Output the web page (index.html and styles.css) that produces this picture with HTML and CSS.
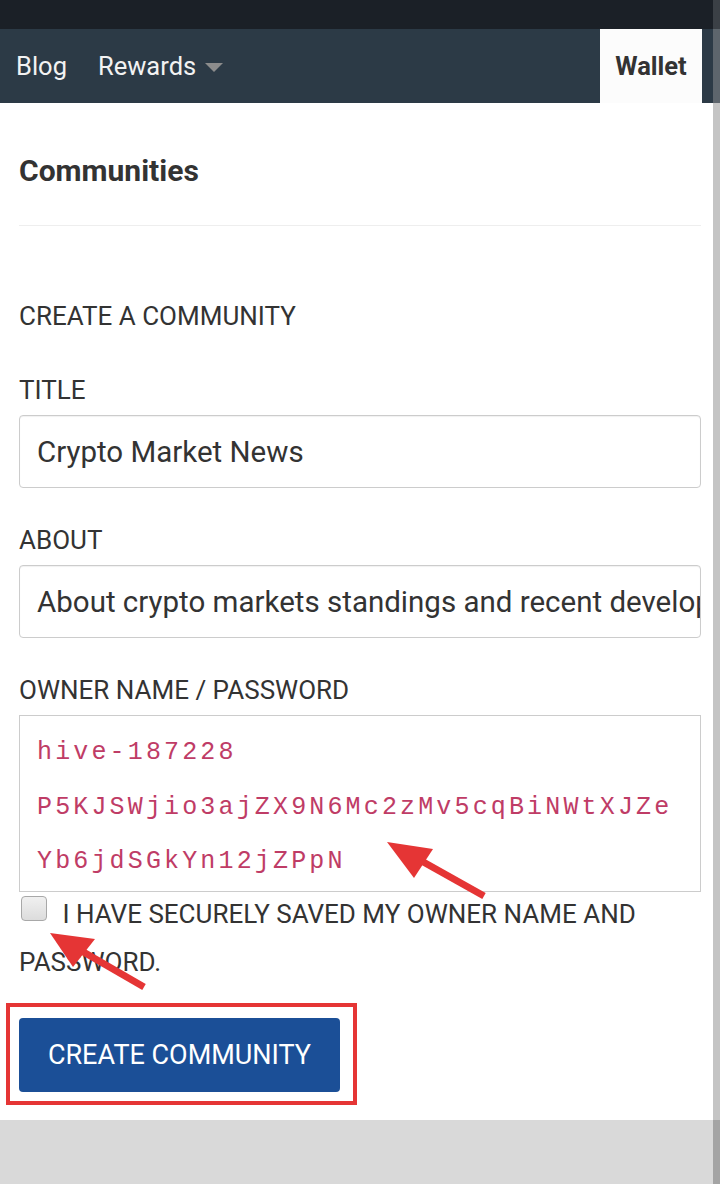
FILE: index.html
```html
<!DOCTYPE html>
<html lang="en">
  <head>
    <meta charset="utf-8">
    <title>Communities - Create</title>
    <link rel="stylesheet" href="styles.css">
  </head>
  <body>
    <div class="topbar"></div>
    <nav class="nav">
      <a class="nav_link">Blog</a>
      <a class="nav_link">Rewards<span class="caret"></span></a>
      <a class="nav_tab">Wallet</a>
    </nav>

    <main class="content">
      <h1 class="heading">Communities</h1>

      <form class="form">
        <div class="form_title">CREATE A COMMUNITY</div>

        <label class="field">
          <span class="field_label">TITLE</span>
          <span class="input">Crypto Market News</span>
        </label>

        <label class="field">
          <span class="field_label">ABOUT</span>
          <span class="input">About crypto markets standings and recent developments</span>
        </label>

        <div class="field field_code">
          <span class="field_label">OWNER NAME / PASSWORD</span>
          <div class="code_box">
            <span class="code_line">hive-187228</span>
            <span class="code_line">P5KJSWjio3ajZX9N6Mc2zMv5cqBiNWtXJZe</span>
            <span class="code_line">Yb6jdSGkYn12jZPpN</span>
          </div>
        </div>

        <label class="confirm">
          <span class="checkbox"></span>
          I HAVE SECURELY SAVED MY OWNER NAME AND PASSWORD.
        </label>

        <button type="button" class="button_create">CREATE COMMUNITY</button>
      </form>
    </main>

    <footer class="footer"></footer>

    <div class="scrollbar"></div>

    <!-- screenshot annotations -->
    <svg class="marks" width="720" height="1184" viewBox="0 0 720 1184">
      <rect x="8" y="1005" width="347" height="98" fill="none" stroke="#e53535" stroke-width="4"/>
      <line x1="484" y1="896" x2="418" y2="859" stroke="#e53535" stroke-width="7"/>
      <polygon points="387,842 433,849 414,878" fill="#e53535"/>
      <line x1="144" y1="987" x2="80" y2="950" stroke="#e53535" stroke-width="7"/>
      <polygon points="50,933 95,939 73,967" fill="#e53535"/>
    </svg>
  </body>
</html>
```

FILE: styles.css
```css
html, body {
    margin: 0px;
    padding: 0px;
}

body {
    width: 720px;
    height: 1184px;
    position: relative;
    overflow: hidden;
    display: flex;
    flex-direction: column;
    font-family: Roboto, "Liberation Sans", sans-serif;
    color: #333;
    background: #fff;
}

.topbar {
    height: 29px;
    background: #1b2027;
}

.nav {
    height: 74px;
    display: flex;
    align-items: stretch;
    padding-left: 16px;
    padding-right: 18px;
    background: #2c3a46;
}

.nav_link {
    display: flex;
    align-items: center;
    margin-right: 31px;
    font-size: 25.5px;
    color: #f2f2f2;
}

.caret {
    display: inline-block;
    width: 0;
    height: 0;
    margin-left: 9px;
    margin-top: 3px;
    border-left: 9px solid transparent;
    border-right: 9px solid transparent;
    border-top: 9px solid #8c8c8c;
}

.nav_tab {
    margin-left: auto;
    width: 102px;
    display: flex;
    align-items: center;
    justify-content: center;
    background: #fcfcfc;
    font-size: 25.5px;
    font-weight: bold;
    color: #333;
}

.content {
    flex: 1;
    padding: 0px 19px;
}

.heading {
    margin: 50px 0px 0px 0px;
    padding-bottom: 37px;
    border-bottom: 1px solid #eee;
    font-size: 30px;
    line-height: 35px;
    font-weight: bold;
    color: #333;
}

.form {
    display: flex;
    flex-direction: column;
    align-items: flex-start;
    padding-top: 75px;
}

.form_title {
    font-size: 26px;
    line-height: 30px;
    margin-bottom: 44px;
}

.field {
    display: flex;
    flex-direction: column;
    align-self: stretch;
    margin-bottom: 37px;
}

.field_code {
    margin-bottom: 0px;
}

.field_label {
    font-size: 26px;
    line-height: 30px;
    margin-bottom: 10px;
}

.input {
    height: 73px;
    box-sizing: border-box;
    display: flex;
    align-items: center;
    padding: 0px 0px 0px 17px;
    border: 1px solid #ccc;
    border-radius: 4px;
    box-shadow: inset 0 1px 1px rgba(0, 0, 0, 0.06);
    font-size: 29.5px;
    color: #333;
    white-space: nowrap;
    overflow: hidden;
}

.code_box {
    height: 177px;
    box-sizing: border-box;
    padding: 10px 0px 0px 17px;
    border: 1px solid #ccc;
    display: flex;
    flex-direction: column;
}

.code_line {
    font-family: "Liberation Mono", monospace;
    font-size: 25px;
    line-height: 54.5px;
    letter-spacing: 3.15px;
    color: #bf3c66;
}

.confirm {
    margin-top: -2px;
    font-size: 26px;
    line-height: 48px;
    color: #333;
}

.checkbox {
    display: inline-block;
    width: 26px;
    height: 25px;
    box-sizing: border-box;
    margin: 0px 9px 0px 2px;
    vertical-align: 2px;
    border: 1px solid #a8a8a8;
    border-radius: 4px;
    background: linear-gradient(#f0f0f0, #dcdcdc);
}

.button_create {
    margin-top: 32px;
    width: 321px;
    height: 74px;
    border: none;
    border-radius: 4px;
    background: #1b4f97;
    color: #fff;
    font-family: Roboto, "Liberation Sans", sans-serif;
    font-size: 27px;
}

.footer {
    height: 64px;
    background: #d9d9d9;
}

.scrollbar {
    position: absolute;
    top: 0px;
    right: 0px;
    width: 7px;
    height: 1184px;
    background: linear-gradient(#3b4046 0px, #3b4046 29px, #5d656c 29px, #5d656c 103px, #c4c4c4 103px, #c4c4c4 1120px, #a4a4a4 1120px);
}

.marks {
    position: absolute;
    top: 0px;
    left: 0px;
    pointer-events: none;
}
```
